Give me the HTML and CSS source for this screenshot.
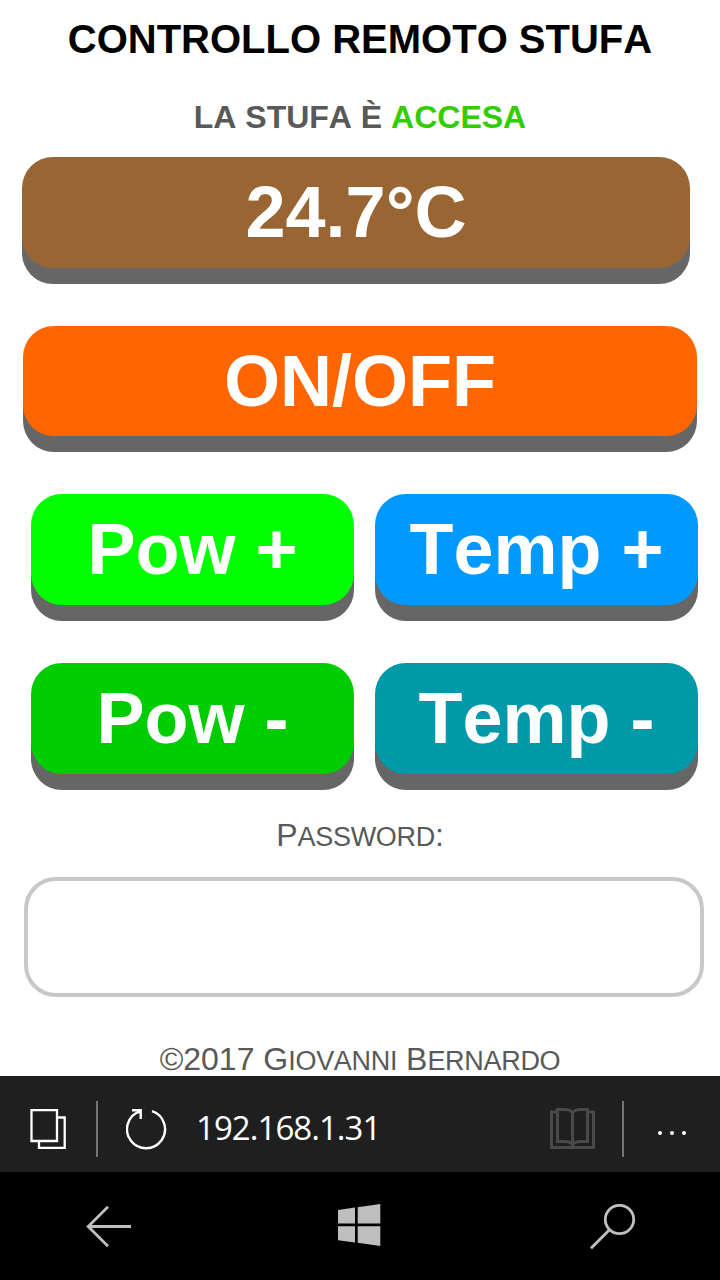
FILE: index.html
```html
<!DOCTYPE html>
<html lang="it">
<head>
<meta charset="utf-8">
<title>Controllo remoto stufa</title>
<link rel="stylesheet" href="styles.css">
</head>
<body>
<main class="page">
  <h1 class="title">CONTROLLO REMOTO STUFA</h1>
  <p class="status">LA STUFA È <span class="status-on">ACCESA</span></p>
  <div class="key key-reading">24.7°C</div>
  <button class="key key-power" type="button">ON/OFF</button>
  <div class="key-grid">
    <button class="key key-pow-up" type="button">Pow +</button>
    <button class="key key-temp-up" type="button">Temp +</button>
    <button class="key key-pow-down" type="button">Pow -</button>
    <button class="key key-temp-down" type="button">Temp -</button>
  </div>
  <label class="caption" for="pw">P<span class="small">ASSWORD</span>:</label>
  <input class="password" id="pw" type="password">
  <p class="caption credit">©2017 G<span class="small">IOVANNI</span> B<span class="small">ERNARDO</span></p>
</main>
<nav class="browser-bar">
  <svg class="icon-tabs" width="36" height="40" viewBox="0 0 36 40" fill="none" stroke="#fff" stroke-width="2.3"><path d="M1.500 1.200H27V32H1.500zM27 8.500H34.700V38.800H9V32"/></svg>
  <span class="divider"></span>
  <svg class="icon-reload" width="42" height="42" viewBox="0 0 42 42" fill="none" stroke="#fff" stroke-width="2.4"><path d="M26 3.200A19 19 0 1 1 13.500 3.400"/><path d="M6 2.300H14.700V11M14.700 2.300L12 5"/></svg>
  <span class="address">192.168.1.31</span>
  <svg class="icon-book" width="46" height="43" viewBox="0 0 46 43" fill="none" stroke="#494949" stroke-width="3"><path d="M8 5H1.500V40.500H43.500V5H37"/><path d="M22.500 5.500C20 2.500 17.500 2.500 15 2.500H7.500V34.500H15C18 34.500 20.500 34.500 22.500 38C24.500 34.500 27 34.500 30 34.500H37.500V2.500H30C27.500 2.500 25 2.500 22.500 5.500V38"/></svg>
  <span class="divider divider-end"></span>
  <svg class="icon-more" width="30" height="4" viewBox="0 0 30 4" fill="#fff"><circle cx="2" cy="2" r="2"/><circle cx="14" cy="2" r="2"/><circle cx="26" cy="2" r="2"/></svg>
</nav>
<nav class="phone-bar">
  <svg class="icon-back" width="46" height="42" viewBox="0 0 46 42" fill="none" stroke="#bfbfbf" stroke-width="2.8"><path d="M45 20.500H2M22 .8L2.200 20.500L22 40.200"/></svg>
  <svg class="icon-start" width="43" height="43" viewBox="0 0 43 43" fill="#bfbfbf"><path d="M0 5.900L17 3.600V19.500H0zM19.700 3.200L42.300 0V19.500H19.700zM0 22.300H17V38.500L0 36.200zM19.700 22.300H42.300V42L19.700 38.800z"/></svg>
  <svg class="icon-search" width="46" height="46" viewBox="0 0 46 46" fill="none" stroke="#bfbfbf" stroke-width="2.800"><circle cx="29.500" cy="15.500" r="14.200"/><path d="M19.500 25.800L1 44.300"/></svg>
</nav>
</body>
</html>
```
FILE: styles.css
```css
* { box-sizing: border-box; }

body {
  margin: 0;
  width: 720px;
  height: 1280px;
  display: flex;
  flex-direction: column;
  overflow: hidden;
  background: #fff;
  color: #595959;
  font-family: "Liberation Sans", Arial, sans-serif;
  font-kerning: none;
}

.page {
  height: 1076px;
  flex: none;
  display: flex;
  flex-direction: column;
  align-items: center;
  padding-top: 17px;
}

.title {
  margin: 0;
  font-size: 40px;
  line-height: 44px;
  color: #000;
}

.status {
  margin: 38px 0 22px;
  font-size: 32px;
  line-height: 36px;
  font-weight: bold;
}

.status-on { color: #3c0; }

.key {
  flex: none;
  height: 111px;
  border: 0;
  padding: 0;
  border-radius: 31px;
  box-shadow: 0 16px #666;
  color: #fff;
  font: bold 72px/111px "Liberation Sans", Arial, sans-serif;
  font-kerning: none;
  text-align: center;
}

.key-reading {
  align-self: flex-start;
  width: 668px;
  margin-left: 22px;
  background: #963;
}

.key-power {
  width: 674px;
  height: 110px;
  margin-top: 58px;
  background: #f60;
}

.key-grid {
  align-self: flex-start;
  display: grid;
  grid-template-columns: 323px 323px;
  gap: 58px 21px;
  margin: 58px 0 0 31px;
}

.key-pow-up { background: #0f0; }
.key-temp-up { background: #09f; }
.key-pow-down { background: #0c0; }
.key-temp-down { background: #09a; }

.caption {
  margin: 43px 0 0;
  font-size: 32px;
  line-height: 36px;
}

.small {
  font-size: 27px;
  letter-spacing: -0.3px;
}

.password {
  align-self: flex-start;
  flex: none;
  width: 680px;
  height: 120px;
  margin: 22px 0 0 24px;
  padding: 0 24px;
  border: 4px solid #c8c8c8;
  border-radius: 32px;
  background: #fff;
  font-size: 72px;
}

.credit { margin-top: 44px; }

.browser-bar {
  flex: none;
  height: 96px;
  display: flex;
  align-items: flex-start;
  background: #1f1f1f;
}

.icon-tabs { margin: 33px 0 0 30px; }

.divider {
  width: 2px;
  height: 56px;
  margin: 25px 0 0 30px;
  background: #767676;
}

.icon-reload { margin: 32px 0 0 28px; }

.address {
  width: 354px;
  margin: 28px 0 0 28px;
  color: #fff;
  font: 33px/48px "Open Sans", "Noto Sans", sans-serif;
  letter-spacing: -0.95px;
}

.icon-book { margin: 31px 0 0; }
.divider-end { margin-left: 26px; }
.icon-more { margin: 55px 0 0 34px; }

.phone-bar {
  flex: none;
  height: 108px;
  display: flex;
  align-items: flex-start;
  background: #000;
}

.icon-back { margin: 34px 0 0 86px; }
.icon-start { margin: 32px 0 0 206px; }
.icon-search { margin: 32px 0 0 209px; }
```
